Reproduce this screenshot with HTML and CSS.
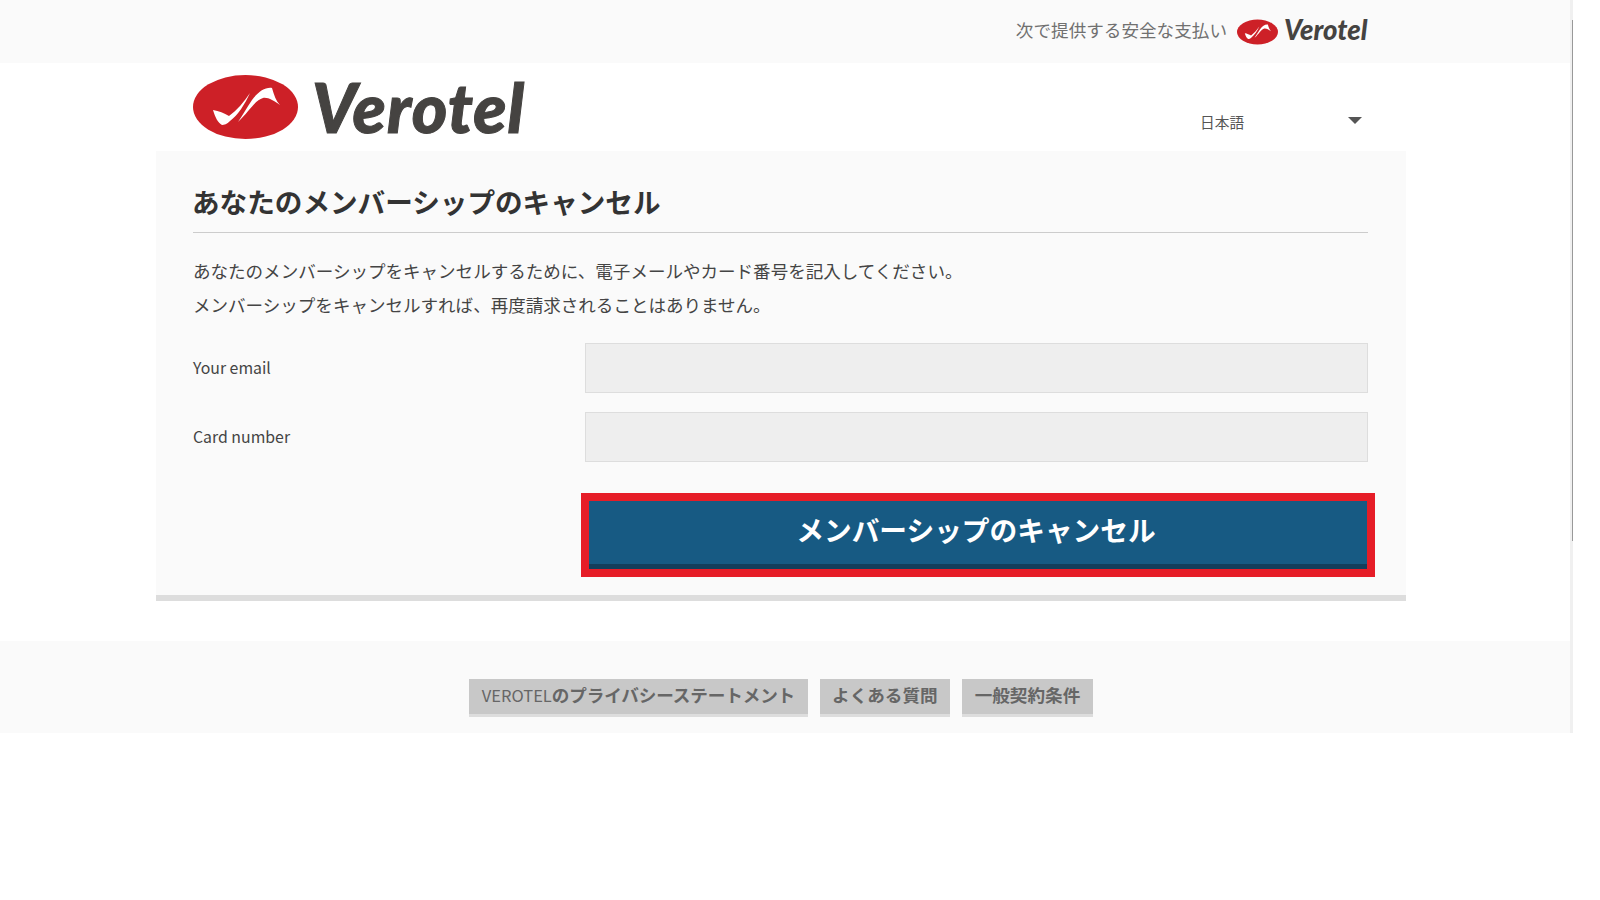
FILE: index.html
```html
<!DOCTYPE html>
<html lang="ja">
<head>
<meta charset="utf-8">
<title>Verotel</title>
<link rel="stylesheet" href="styles.css">
</head>
<body>
<svg class="defs" width="0" height="0" aria-hidden="true">
  <symbol id="mark" viewBox="0 0 105 64">
    <ellipse cx="52.5" cy="32" rx="52.5" ry="32" fill="#cd2027"/>
    <path fill="#fff" d="M20 35C26 36 31 38 36 41C44 35 51 27 57 18C52 29 45 40 37 46C34 49 31 50 29 50C25 48 22 42 20 35Z"/>
    <path fill="#fff" d="M45 47C50 40 54 32 59 25C65 17 72 12 79 13C81 20 83 26 87 30C81 26 75 22 70 23C62 25 56 37 45 47Z"/>
  </symbol>
</svg>
<div class="page">
  <div class="main">
    <header class="topbar">
      <span class="secure">次で提供する安全な支払い</span>
      <svg class="mark-small"><use href="#mark"/></svg>
      <span class="brand-small">Verotel</span>
    </header>
    <div class="container">
      <div class="head">
        <div class="logo">
          <svg class="mark-large"><use href="#mark"/></svg>
          <span class="brand-large">Verotel</span>
        </div>
        <div class="lang">
          <span>日本語</span>
          <span class="caret"></span>
        </div>
      </div>
      <section class="panel">
        <h1 class="title">あなたのメンバーシップのキャンセル</h1>
        <p class="intro">あなたのメンバーシップをキャンセルするために、電子メールやカード番号を記入してください。<br>メンバーシップをキャンセルすれば、再度請求されることはありません。</p>
        <form class="form">
          <div class="row">
            <label class="label" for="email">Your email</label>
            <input class="field" id="email" type="text">
          </div>
          <div class="row">
            <label class="label" for="card">Card number</label>
            <input class="field" id="card" type="text">
          </div>
          <div class="row action">
            <button class="submit" type="button">メンバーシップのキャンセル</button>
          </div>
        </form>
      </section>
    </div>
    <footer class="footer">
      <a class="flink"><span class="latin">VEROTEL</span><span class="tight">のプライバシーステートメント</span></a>
      <a class="flink">よくある質問</a>
      <a class="flink">一般契約条件</a>
    </footer>
  </div>
  <div class="scrollbar"><div class="thumb"></div></div>
</div>
</body>
</html>
```

FILE: styles.css
```css
* { box-sizing: border-box; }
html, body { margin: 0; padding: 0; background: #fff; }
body {
  font-family: "Noto Sans CJK JP", "Noto Sans", sans-serif;
  color: #3d3d3d;
  overflow: hidden;
}
.defs { position: absolute; }
.page { display: flex; width: 1573px; height: 733px; }
.main { width: 1570px; display: flex; flex-direction: column; }
.scrollbar { width: 3px; background: #f0f0f0; padding: 20px 0 192px 2px; }
.thumb { width: 1px; height: 100%; background: #999; }

.topbar {
  height: 63px;
  background: #fafafa;
  display: flex;
  align-items: center;
  justify-content: flex-end;
  padding-right: 202px;
}
.secure { font-size: 17.6px; color: #707070; margin: 0 10px 4px 0; line-height: 1; }
.mark-small { width: 41px; height: 26px; margin-right: 6px; }
.brand-small, .brand-large {
  font-family: "Lato", "Liberation Sans", sans-serif;
  font-weight: 900;
  font-style: italic;
  color: #454341;
  line-height: 1;
  white-space: nowrap;
}
.brand-small { font-size: 27.5px; width: 84px; margin-bottom: 3px; }

.container { width: 1250px; margin-left: 156px; }
.head {
  height: 88px;
  display: flex;
  justify-content: space-between;
  padding: 12px 38px 0 37px;
}
.logo { display: flex; align-items: center; height: 64px; }
.mark-large { width: 105px; height: 64px; margin-right: 14px; }
.brand-large { font-size: 68px; letter-spacing: 1px; -webkit-text-stroke: 1px #454341; }
.lang {
  width: 168px;
  height: 24px;
  margin-top: 34px;
  padding-right: 6px;
  display: flex;
  justify-content: space-between;
  align-items: center;
  font-size: 14.7px;
  color: #555;
}
.caret {
  width: 0;
  height: 0;
  margin-top: -2px;
  border-left: 7px solid transparent;
  border-right: 7px solid transparent;
  border-top: 7px solid #555;
}

.panel {
  background: #fafafa;
  border-bottom: 6px solid #ddd;
  height: 450px;
  padding: 28px 38px 0 37px;
}
.title {
  margin: 0;
  height: 54px;
  border-bottom: 1px solid #ccc;
  font-size: 27.6px;
  line-height: 44px;
  font-weight: 700;
  color: #333;
  text-indent: -1px;
}
.intro {
  margin: 21px 0 0;
  font-size: 17.54px;
  line-height: 33.6px;
  color: #444;
}
.form { margin-top: 22px; display: flex; flex-direction: column; gap: 19px; }
.row { display: flex; align-items: center; height: 50px; }
.label { width: 392px; font-size: 15.85px; color: #444; padding-bottom: 2px; }
.field {
  width: 783px;
  height: 50px;
  background: #eee;
  border: 1px solid #ddd;
  padding: 0 10px;
  outline: none;
}
.action { height: 68px; margin-top: 20px; justify-content: flex-end; padding-right: 1px; }
.submit {
  width: 778px;
  height: 68px;
  background: #175a83;
  border: 0;
  border-bottom: 5px solid #143e5b;
  outline: 8px solid #e61d27;
  color: #fff;
  font-family: inherit;
  font-size: 27.7px;
  font-weight: 700;
  padding: 0 4px 8px 0;
}

.footer {
  margin-top: 40px;
  height: 92px;
  background: #fafafa;
  display: flex;
  justify-content: center;
  gap: 12px;
  padding: 38px 8px 0 0;
}
.flink {
  height: 38px;
  padding: 0 12.5px;
  background: #c8c8c8;
  border-bottom: 3px solid #ddd;
  font-size: 17.6px;
  font-weight: 700;
  line-height: 32px;
  color: #666;
}
.latin { font-weight: 400; font-size: 16.5px; }
.tight { letter-spacing: -0.13px; }
```
